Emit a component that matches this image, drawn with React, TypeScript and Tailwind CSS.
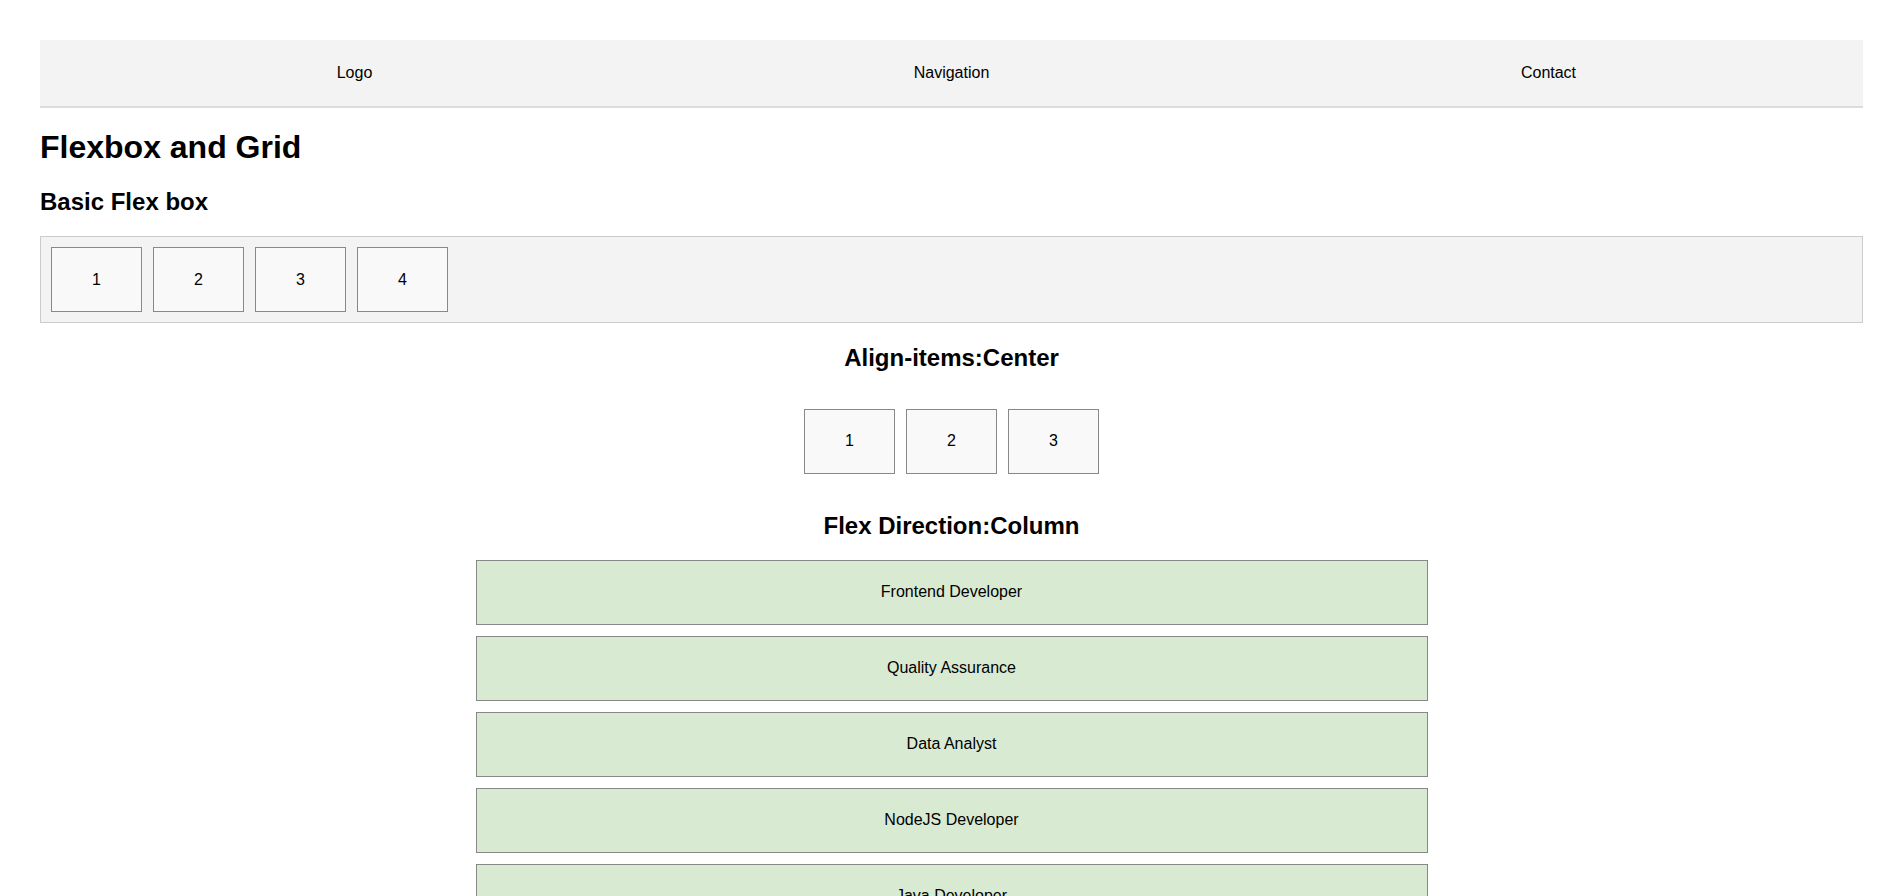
import React from "react";

const navItems = ["Logo", "Navigation", "Contact"];
const basicBoxes = ["1", "2", "3", "4"];
const centerBoxes = ["1", "2", "3"];
const roles = [
  "Frontend Developer",
  "Quality Assurance",
  "Data Analyst",
  "NodeJS Developer",
  "Java Developer",
  "Python Developer",
];

const Box = ({ label }: { label: string }) => (
  <div className="w-[91px] h-[65px] flex items-center justify-center bg-[#f9f9f9] border border-[#888] text-[16px] leading-[1.15]">
    {label}
  </div>
);

export default function App() {
  return (
    <div
      className="bg-white text-black pt-[40px] pb-[40px] pl-[40px] pr-[34px] min-h-screen"
      style={{ fontFamily: '"Liberation Sans", Arial, sans-serif' }}
    >
      <header className="flex items-center h-[68px] px-[16px] bg-[#f3f3f3] border-b-2 border-[#dcdcdc]">
        {navItems.map((item) => (
          <div key={item} className="flex-1 text-center text-[16px] leading-[1.15]">
            {item}
          </div>
        ))}
      </header>

      <h1 className="text-[32px] font-bold leading-[1.15] mt-[21px] mb-[22px]">
        Flexbox and Grid
      </h1>

      <h2 className="text-[24px] font-bold leading-[1.15] mb-[21px]">
        Basic Flex box
      </h2>
      <div className="flex gap-[11px] p-[10px] bg-[#f3f3f3] border border-[#cccccc]">
        {basicBoxes.map((b) => (
          <Box key={b} label={b} />
        ))}
      </div>

      <h2 className="text-[24px] font-bold leading-[1.15] text-center mt-[21px] mb-[20px]">
        Align-items:Center
      </h2>
      <div className="flex justify-center items-center gap-[11px] h-[99px]">
        {centerBoxes.map((b) => (
          <Box key={b} label={b} />
        ))}
      </div>

      <h2 className="text-[24px] font-bold leading-[1.15] text-center mt-[21px] mb-[20px]">
        Flex Direction:Column
      </h2>
      <div className="flex flex-col items-center gap-[11px]">
        {roles.map((r) => (
          <div
            key={r}
            className="w-[952px] h-[65px] flex items-center justify-center bg-[#d9ead3] border border-[#888] text-[16px] leading-[1.15]"
          >
            {r}
          </div>
        ))}
      </div>
    </div>
  );
}
